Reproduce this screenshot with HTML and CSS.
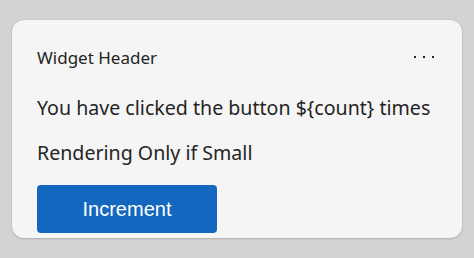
FILE: index.html
```html
<!DOCTYPE html>
<html>
<head>
<meta charset="utf-8">
<link rel="stylesheet" href="styles.css">
</head>
<body>
<div class="card">
  <div class="header">
    <span class="title">Widget Header</span>
    <span class="more" aria-label="More"><i></i><i></i><i></i></span>
  </div>
  <p class="line first">You have clicked the button ${count} times</p>
  <p class="line second">Rendering Only if Small</p>
  <button class="btn">Increment</button>
</div>
</body>
</html>
```
FILE: styles.css
```css
html, body { margin: 0; padding: 0; }
body {
  background: #d3d3d3;
  width: 474px;
  height: 258px;
  padding: 20px 12px;
  box-sizing: border-box;
  font-family: "Noto Sans", "Open Sans", sans-serif;
  color: #242424;
}
.card {
  width: 450px;
  height: 218px;
  box-sizing: border-box;
  background: #f5f5f5;
  border-radius: 12px;
  box-shadow: 0 1px 2px rgba(0,0,0,0.14), 0 0 2px rgba(0,0,0,0.12);
  padding: 25px 25px 0 25px;
  display: flex;
  flex-direction: column;
  align-items: flex-start;
}
.header {
  align-self: stretch;
  display: flex;
  justify-content: space-between;
  align-items: center;
  height: 24px;
  flex-shrink: 0;
}
.title { font-size: 17px; line-height: 24px; padding-top: 1px; }
.more { display: flex; gap: 7px; margin-right: 3px; }
.more i { width: 2px; height: 2px; background: #242424; display: block; }
.line { margin: 0; font-size: 19.6px; line-height: 28px; white-space: nowrap; flex-shrink: 0; }
.first { margin-top: 25px; }
.second { margin-top: 17px; }
.btn {
  flex-shrink: 0;
  margin-top: 18px;
  width: 180px;
  height: 48px;
  border: 0;
  border-radius: 4px;
  background: #1467be;
  color: #fff;
  font-family: "Liberation Sans", Arial, sans-serif;
  font-size: 20px;
  padding: 0;
}
```
